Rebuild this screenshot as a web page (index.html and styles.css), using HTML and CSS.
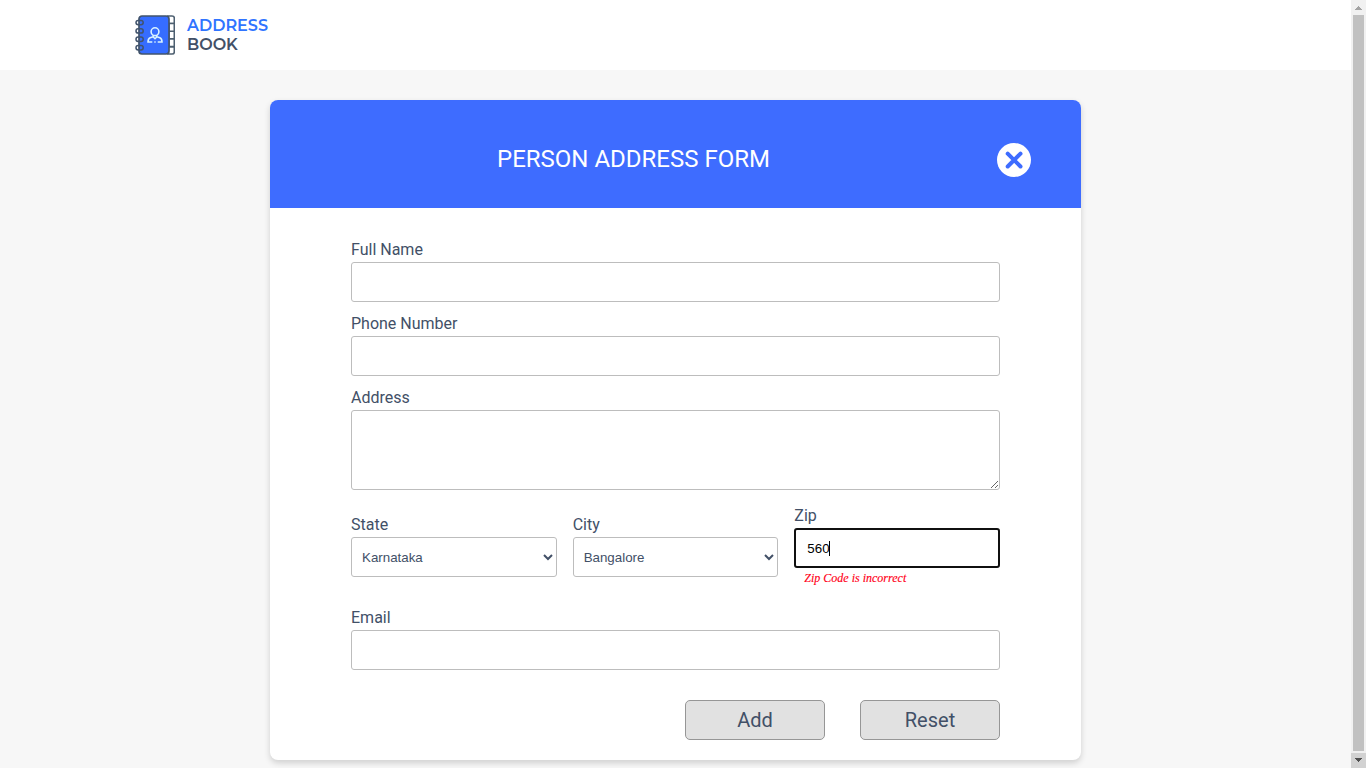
FILE: index.html
```html
<!DOCTYPE html>
<html lang="en">
<head>
<meta charset="utf-8">
<title>Address Book</title>
<link rel="stylesheet" href="styles.css">
</head>
<body>
<div class="window">
  <div class="page">
    <header class="site-header">
      <svg class="logo" width="40" height="40" viewBox="0 0 40 40" fill="none">
        <path d="M33 1h4q2.300 0 2.300 2v5.500h-6zM33 31.600h6.300v5.400q0 2-2.300 2h-4z" fill="#fff" stroke="#4d5f70" stroke-width="1.600"/>
        <path d="M34 8.500h5.300v7.700H34zM34 16.200h5.300v7.700H34zM34 23.900h5.300v7.700H34z" fill="#fff" stroke="#4d5f70" stroke-width="1.600"/>
        <rect x="4" y="1" width="30" height="38" rx="3" fill="#366dff" stroke="#42546c" stroke-width="1.700"/>
        <g stroke="#42546c" stroke-width="1.500">
          <rect x="1" y="5.400" width="7.200" height="4.400" rx="2.200"/>
          <rect x="1" y="13.700" width="7.200" height="4.400" rx="2.200"/>
          <rect x="1" y="22.100" width="7.200" height="4.400" rx="2.200"/>
          <rect x="1" y="30.500" width="7.200" height="4.400" rx="2.200"/>
        </g>
        <g stroke="#d9f3ff" stroke-width="1.600">
          <circle cx="20" cy="16.700" r="3.900"/>
          <path d="M18.300 20v1.700l-3.200 1.100q-2.100.9-2.100 4.200h4.300M21.700 20v1.700l3.200 1.100q2.100.9 2.100 4.200h-4.300M19.300 27h1.400M18.300 22l1.700 1.700 1.700-1.700"/>
        </g>
      </svg>
      <div class="brand"><span class="brand-top">ADDRESS</span><span class="brand-bottom">BOOK</span></div>
    </header>
    <main class="card">
      <div class="card-head">
        <h1 class="title">PERSON ADDRESS FORM</h1>
        <svg class="close" width="34" height="34" viewBox="0 0 34 34"><circle cx="17" cy="17" r="17" fill="#fff"/><path d="M10.700 10.700l12.800 12.800M23.500 10.700L10.700 23.500" stroke="#3e6cff" stroke-width="4" stroke-linecap="round"/></svg>
      </div>
      <form class="form">
        <div class="field"><label class="label" for="name">Full Name</label><input class="control" id="name"></div>
        <div class="field"><label class="label" for="phone">Phone Number</label><input class="control" id="phone"></div>
        <div class="field"><label class="label" for="address">Address</label><textarea class="control area" id="address"></textarea></div>
        <div class="row">
          <div class="field"><label class="label" for="state">State</label><select class="control select" id="state"><option>Karnataka</option></select></div>
          <div class="field"><label class="label" for="city">City</label><select class="control select" id="city"><option>Bangalore</option></select></div>
          <div class="field zip"><label class="label" for="zip">Zip</label><div class="zip-box"><input class="control active" id="zip" value="560"><span class="caret"></span></div><output class="error">Zip Code is incorrect</output></div>
        </div>
        <div class="field"><label class="label" for="email">Email</label><input class="control" id="email"></div>
        <div class="actions"><button class="button" type="button">Add</button><button class="button" type="reset">Reset</button></div>
      </form>
    </main>
  </div>
  <div class="scrollbar">
    <svg class="arrow" width="15" height="15" shape-rendering="crispEdges"><path d="M7 6h1v1h1v1h1v1h1v1H4V9h1V8h1V7h1z" fill="#a3a3a3"/></svg>
    <div class="thumb"></div>
    <svg class="arrow arrow-down" width="15" height="15" shape-rendering="crispEdges"><path d="M4 5h7v1h-1v1H9v1H8v1H7V8H6V7H5V6H4z" fill="#505050"/></svg>
  </div>
</div>
</body>
</html>
```
FILE: styles.css
```css
* { box-sizing: border-box; }
html, body { margin: 0; height: 768px; overflow: hidden; }
body { background: #f7f7f7; color: #425067; font-family: Roboto, sans-serif; }
.window { display: flex; height: 768px; }
.page { flex: 1; }
.site-header { display: flex; align-items: center; gap: 12px; height: 70px; padding-left: 135px; background: #fff; }
.logo { display: block; }
.brand { display: flex; flex-direction: column; font: 600 16px/19px Montserrat, Inter, sans-serif; }
.brand-top { color: #3074ff; }
.brand-bottom { color: #425067; }
.card { width: 811px; height: 660px; margin: 30px 0 0 270px; background: #fff; border-radius: 8px; box-shadow: 0 3px 6px rgba(0, 0, 0, 0.16); overflow: hidden; }
.card-head { display: flex; align-items: center; height: 108px; padding: 12px 50px 0 0; background: #3e6cff; }
.title { flex: 1; margin: 0 0 2px; text-align: center; font-weight: 400; font-size: 24px; line-height: 28px; color: #fff; }
.form { display: flex; flex-direction: column; width: 649px; margin: 32px 0 0 81px; }
.field { display: flex; flex-direction: column; margin-bottom: 12px; }
.label { height: 22px; font-size: 16px; line-height: 19px; color: #425067; }
.control { display: block; width: 100%; height: 40px; margin: 0; padding: 0 11px; border: 1px solid #bdbdbd; border-radius: 3px; background: #fff; color: #000; font: 13.333px "Liberation Sans", Arial, sans-serif; outline: none; }
.area { height: 80px; resize: vertical; }
.row { display: grid; grid-template-columns: repeat(3, 1fr); gap: 16px; align-items: center; height: 88px; margin-bottom: 18px; }
.row .field { margin: 0; }
.select { padding: 0 6px; color: #425067; }
.zip-box { position: relative; }
.active { border: 2px solid #101010; }
.caret { position: absolute; left: 35px; top: 13px; width: 1px; height: 15px; background: #000; }
.error { height: 18px; padding: 3px 0 0 10px; font: italic 12px/14px "Liberation Serif", serif; color: #ff0018; -webkit-text-stroke: 0.15px #ff0018; }
.actions { display: flex; justify-content: flex-end; gap: 35px; margin-top: 18px; }
.button { width: 140px; height: 40px; padding: 0; border: 1px solid #969696; border-radius: 5px; background: #e1e1e1; color: #425067; font: 20px Roboto, sans-serif; }
.scrollbar { display: flex; flex-direction: column; width: 15px; background: #f1f1f1; }
.arrow { display: block; flex: none; }
.arrow-down { background: #d2d2d2; }
.thumb { flex: 1; margin: 0 2px 2px; background: #c1c1c1; }
```
